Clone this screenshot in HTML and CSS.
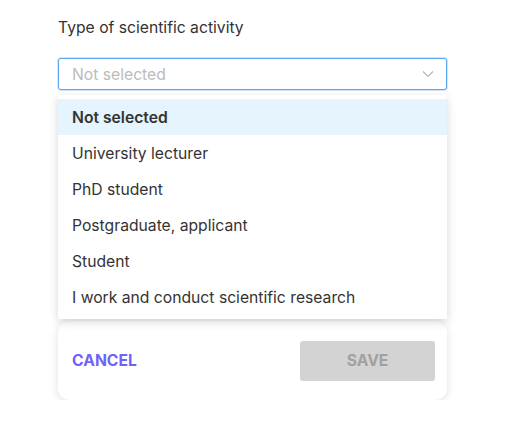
FILE: index.html
```html
<!DOCTYPE html>
<html lang="en">
<head>
    <meta charset="UTF-8">
    <meta name="viewport" content="width=device-width, initial-scale=1.0">
    <title>Type of scientific activity</title>
    <link rel="stylesheet" href="styles.css">
</head>
<body>

    <!-- Select field -->
    <div class="field">
        <label class="field-label">Type of scientific activity</label>
        <div class="select-wrap">
            <div class="select">
                <span class="select-placeholder">Not selected</span>
                <svg class="chevron" width="12" height="8" viewBox="0 0 12 8">
                    <path d="M1 1.5 L6 6.5 L11 1.5" fill="none" stroke="#b5b5b5" stroke-width="1.2"/>
                </svg>
            </div>

            <!-- Open dropdown -->
            <ul class="dropdown">
                <li class="option active">Not selected</li>
                <li class="option">University lecturer</li>
                <li class="option">PhD student</li>
                <li class="option">Postgraduate, applicant</li>
                <li class="option">Student</li>
                <li class="option">I work and conduct scientific research</li>
            </ul>
        </div>
    </div>

    <!-- Footer actions -->
    <div class="actions">
        <button class="btn-cancel">CANCEL</button>
        <button class="btn-save" disabled>SAVE</button>
    </div>

</body>
</html>
```

FILE: styles.css
```css
/* Global Styles */
body, html {
    margin: 0;
    padding: 0;
    background-color: #fff;
    font-family: Inter, "Noto Sans", sans-serif;
    color: #333;
}

/* Field */
.field {
    width: 389px;
    margin-left: 58px;
    padding-top: 18px;
}

.field-label {
    display: block;
    font-size: 15.7px;
    line-height: 20px;
    color: #333;
    margin-bottom: 20px;
}

.select-wrap {
    position: relative;
}

.select {
    box-sizing: border-box;
    height: 32px;
    display: flex;
    align-items: center;
    justify-content: space-between;
    padding: 0 12px 0 13px;
    border: 1px solid #5aa8f2;
    border-radius: 3px;
    box-shadow: 0 0 0 1px #cfe6fb;
    background-color: #fff;
}

.select-placeholder {
    font-size: 15.7px;
    color: #bcbcbc;
}

.chevron {
    display: block;
}

/* Dropdown menu (overlay) */
.dropdown {
    position: absolute;
    top: 37px;
    left: 0;
    right: 0;
    margin: 0;
    padding: 4px 0 4px;
    list-style-type: none;
    background-color: #fff;
    border-radius: 2px;
    box-shadow: 0 3px 10px rgba(0, 0, 0, 0.16);
    z-index: 10;
}

.option {
    box-sizing: border-box;
    height: 36px;
    padding: 2px 0 0 14px;
    line-height: 34px;
    font-size: 15.7px;
    color: #333;
}

.option.active {
    background-color: #e5f4fd;
    font-weight: 600;
}

/* Footer card */
.actions {
    box-sizing: border-box;
    width: 389px;
    height: 79px;
    margin: 231px 0 0 58px;
    padding: 0 12px 0 14px;
    display: flex;
    align-items: center;
    justify-content: space-between;
    background-color: #fff;
    border-radius: 12px;
    box-shadow: 0 2px 10px rgba(0, 0, 0, 0.12);
}

.btn-cancel {
    border: none;
    background: none;
    padding: 0;
    font-family: inherit;
    font-size: 15.7px;
    font-weight: 700;
    color: #6e63f6;
    cursor: pointer;
}

.btn-save {
    width: 135px;
    height: 40px;
    border: none;
    border-radius: 3px;
    background-color: #d3d3d3;
    font-family: inherit;
    font-size: 15.7px;
    font-weight: 700;
    color: #a1a1a1;
}
```
